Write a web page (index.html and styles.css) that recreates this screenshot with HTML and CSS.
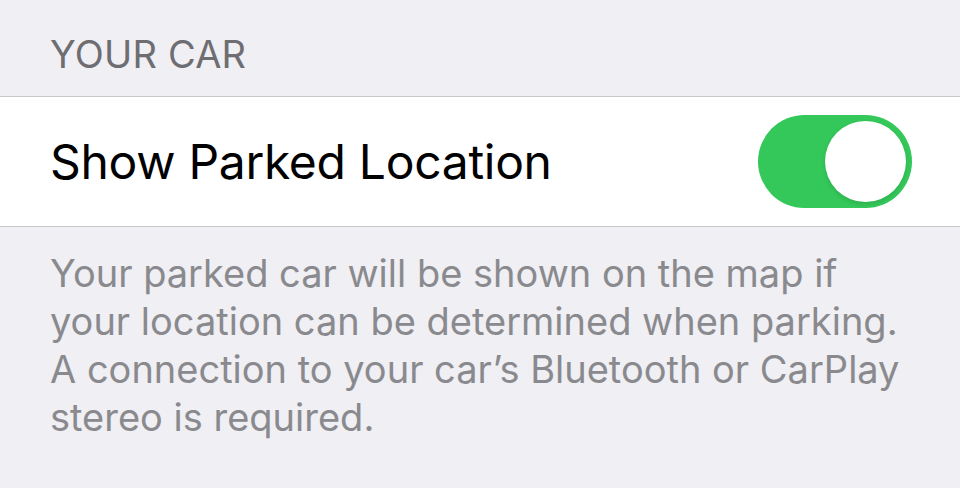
FILE: index.html
```html
<!DOCTYPE html>
<html lang="en">
<head>
<meta charset="UTF-8" />
<meta name="viewport" content="width=device-width, initial-scale=1" />
<title>Maps Settings</title>
<link rel="stylesheet" href="styles.css">
</head>
<body>
  <section class="group">
    <h3 class="group-header">YOUR CAR</h3>
    <div class="group-body">
      <label class="cell">
        <span class="cell-title">Show Parked Location</span>
        <input type="checkbox" class="switch" checked />
      </label>
    </div>
    <p class="group-footer">Your parked car will be shown on the map if your location can be determined when parking. A connection to your car’s Bluetooth or CarPlay stereo is required.</p>
  </section>
</body>
</html>
```

FILE: styles.css
```css
* {
  box-sizing: border-box;
}
html, body {
  margin: 0;
  padding: 0;
  background: #efeff4;
  font-family: Inter, 'Liberation Sans', sans-serif;
  height: 100%;
  overflow: hidden;
}
.group-header {
  margin: 0;
  padding: 31px 50px 0 50px;
  height: 96px;
  font-size: 38px;
  font-weight: 400;
  line-height: 46px;
  color: #6d6d72;
  letter-spacing: 0.2px;
}
.group-body {
  background: #fff;
  border-top: 1px solid #c8c7cc;
  border-bottom: 1px solid #c8c7cc;
}
.cell {
  height: 129px;
  display: flex;
  align-items: center;
  justify-content: space-between;
  padding: 0 48px 0 50px;
}
.cell-title {
  font-size: 48px;
  color: #000;
  letter-spacing: -0.3px;
}

/* iOS style switch */
.switch {
  appearance: none;
  -webkit-appearance: none;
  margin: 0;
  width: 154px;
  height: 93px;
  border-radius: 47px;
  background: #34c759;
  position: relative;
  cursor: pointer;
}
.switch::after {
  content: '';
  position: absolute;
  top: 6px;
  right: 6px;
  width: 81px;
  height: 81px;
  border-radius: 50%;
  background: #fff;
  box-shadow: 0 2px 4px rgba(0,0,0,0.12);
}
.switch:not(:checked) {
  background: #e9e9ea;
}
.switch:not(:checked)::after {
  right: auto;
  left: 6px;
}

.group-footer {
  margin: 0;
  padding: 22px 46px 0 50px;
  font-size: 38px;
  line-height: 48px;
  color: #8a8a8e;
}
```
